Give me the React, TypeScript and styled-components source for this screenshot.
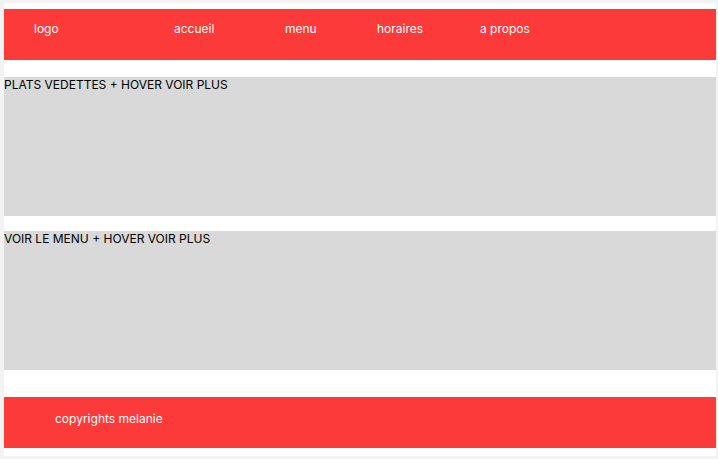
import React from 'react';
import styled, { createGlobalStyle } from 'styled-components';

const GlobalStyle = createGlobalStyle`
  html, body {
    margin: 0;
    padding: 0;
    background-color: #f3f3f3;
  }

  body {
    font-family: Inter, 'Noto Sans', Arial, sans-serif;
    font-size: 12px;
  }
`;

const NAV_LINKS = ['accueil', 'menu', 'horaires', 'a propos'];

const SECTIONS = ['PLATS VEDETTES + HOVER VOIR PLUS', 'VOIR LE MENU + HOVER VOIR PLUS'];

const App = () => {
  return (
    <>
      <GlobalStyle />
      <Page>
        <Header>
          <Logo>logo</Logo>
          {NAV_LINKS.map(link => (
            <NavLink key={link} href="#">
              {link}
            </NavLink>
          ))}
        </Header>

        <Main>
          {SECTIONS.map(title => (
            <Section key={title}>{title}</Section>
          ))}
        </Main>

        <Footer>copyrights melanie</Footer>
      </Page>
    </>
  );
};

const Page = styled.div`
  display: flex;
  flex-direction: column;
  width: 712px;
  height: 453px;
  margin: 3px 0 0 4px;
  padding-top: 6px;
  box-sizing: border-box;
  background-color: #ffffff;
`;

const Header = styled.header`
  display: grid;
  grid-template-columns: 140px 111px 92px 103px auto;
  align-items: start;
  height: 51px;
  padding: 12px 0 0 30px;
  box-sizing: border-box;
  background-color: #fc3a3a;
  color: #ffffff;
`;

const Logo = styled.span`
  line-height: 15px;
`;

const NavLink = styled.a`
  color: inherit;
  text-decoration: none;
  line-height: 15px;
`;

const Main = styled.main`
  display: flex;
  flex-direction: column;
  gap: 15px;
  margin-top: 17px;
`;

const Section = styled.section`
  height: 139px;
  background-color: #d9d9d9;
  color: #000000;
  line-height: 15px;
`;

const Footer = styled.footer`
  height: 51px;
  margin-top: 27px;
  padding: 14px 0 0 51px;
  box-sizing: border-box;
  background-color: #fc3a3a;
  color: #ffffff;
  line-height: 15px;
`;

export default App;
